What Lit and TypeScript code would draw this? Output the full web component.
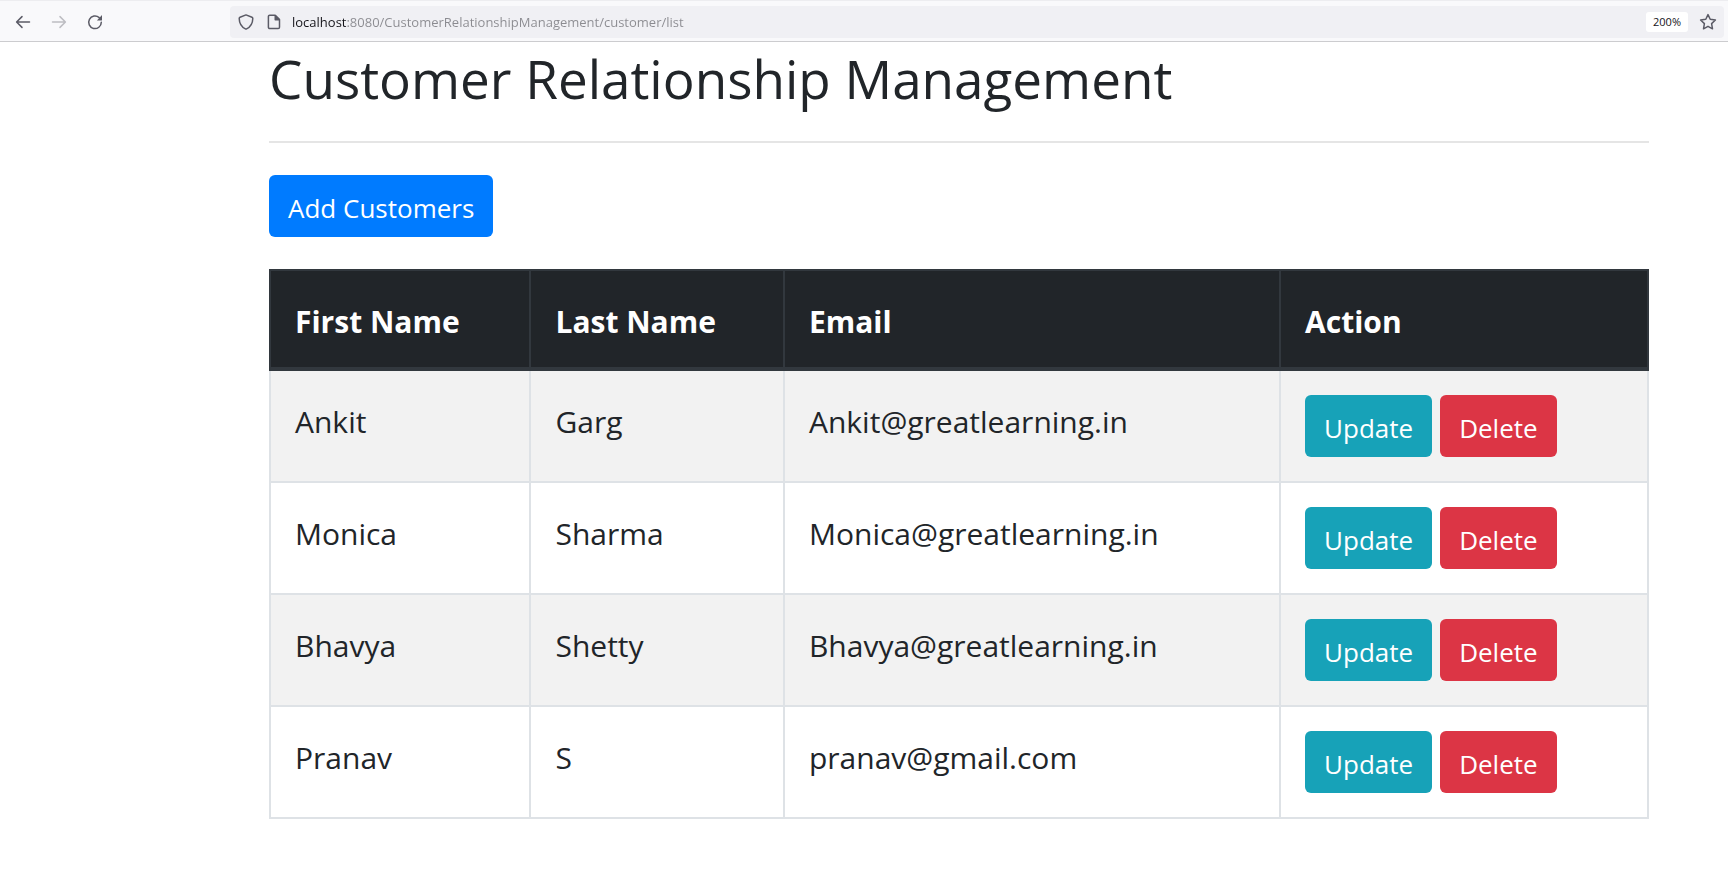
import { LitElement, html, css } from "lit";
import { customElement, property, state } from "lit/decorators.js";

interface Customer {
  firstName: string;
  lastName: string;
  email: string;
}

@customElement("browser-bar")
class BrowserBar extends LitElement {
  @property() url = "";

  static styles = css`
    :host {
      display: block;
      font-family: "Open Sans", "Noto Sans", sans-serif;
    }
    .bar {
      display: flex;
      align-items: center;
      box-sizing: border-box;
      height: 42px;
      padding: 3px 4px 2px 12px;
      border-top: 1px solid #ededf0;
      border-bottom: 1px solid #cccccf;
      background: #f9f9fb;
    }
    .nav {
      display: flex;
      gap: 14px;
      width: 218px;
      flex: none;
    }
    button {
      display: flex;
      padding: 3px;
      border: 0;
      background: none;
      font: inherit;
      color: #5b5b66;
    }
    button:disabled {
      color: #bdbdc2;
    }
    svg {
      display: block;
      fill: none;
      stroke: currentColor;
      stroke-width: 1.5;
      stroke-linecap: round;
      stroke-linejoin: round;
    }
    svg .solid {
      fill: currentColor;
      stroke: none;
    }
    .location {
      display: flex;
      align-items: center;
      flex: 1;
      min-width: 0;
      height: 32px;
      padding: 0 4px 0 5px;
      box-sizing: border-box;
      border-radius: 4px;
      background: #f0f0f4;
    }
    .site {
      display: flex;
      gap: 6px;
      margin-right: 7px;
    }
    .url {
      flex: 1;
      min-width: 0;
      padding: 0;
      border: 0;
      outline: 0;
      font: 13px/20px "Open Sans", "Noto Sans", sans-serif;
      color: transparent;
      background: linear-gradient(90deg, #15141a 55px, #8b8b90 55px);
      background-clip: text;
      -webkit-background-clip: text;
    }
    .zoom {
      margin-right: 8px;
      padding: 0 7px;
      border-radius: 3px;
      background: #fff;
      font-size: 11px;
      line-height: 20px;
      color: #15141a;
    }
  `;

  render() {
    return html`
      <nav class="bar" aria-label="Browser">
        <div class="nav">
          <button aria-label="Back">
            <svg width="16" height="16" viewBox="0 0 16 16"><path d="M14.5 8H1.8M7 2.6 1.6 8 7 13.4" /></svg>
          </button>
          <button aria-label="Forward" disabled>
            <svg width="16" height="16" viewBox="0 0 16 16"><path d="M1.5 8h12.7M9 2.6 14.4 8 9 13.4" /></svg>
          </button>
          <button aria-label="Reload">
            <svg width="16" height="16" viewBox="0 0 16 16">
              <path d="M12.2 3.6A6.3 6.3 0 1 0 14.3 8.3" />
              <path class="solid" d="M15 1.1v4.9a.6.6 0 0 1-.6.6H9.9z" />
            </svg>
          </button>
        </div>
        <div class="location">
          <div class="site">
            <button aria-label="Tracking protection">
              <svg width="16" height="16" viewBox="0 0 16 16">
                <path d="M8 .9 14 3.3c.5.2.8.6.8 1.1-.1 4.6-2.3 8.4-6.2 10.4a1.3 1.3 0 0 1-1.2 0C3.5 12.800 1.300 9 1.200 4.400c0-.5.3-.9.8-1.100z" />
              </svg>
            </button>
            <button aria-label="Site information">
              <svg width="16" height="16" viewBox="0 0 16 16">
                <path d="M3.7 1.200h5.500l4.300 4.300v7.700a1.300 1.300 0 0 1-1.300 1.300H3.700a1.300 1.300 0 0 1-1.300-1.300V2.500a1.300 1.300 0 0 1 1.300-1.300z" />
                <path class="solid" d="M8.500 1h1.200l4.200 4.200v1.200H9.200a.7.7 0 0 1-.7-.7z" />
              </svg>
            </button>
          </div>
          <input class="url" type="text" aria-label="Address" .value=${this.url} spellcheck="false" />
          <button class="zoom" aria-label="Reset zoom level">200%</button>
          <button aria-label="Bookmark this page">
            <svg width="18" height="18" viewBox="0 0 18 18">
              <path d="M9 1.600l2.200 4.700 5.200.7-3.800 3.600.9 5.200L9 13.300l-4.500 2.500.9-5.200L1.600 7l5.200-.7z" />
            </svg>
          </button>
        </div>
      </nav>
    `;
  }
}

@customElement("app-root")
class AppRoot extends LitElement {
  @state() private customers: Customer[] = [
    { firstName: "Ankit", lastName: "Garg", email: "Ankit@greatlearning.in" },
    { firstName: "Monica", lastName: "Sharma", email: "Monica@greatlearning.in" },
    { firstName: "Bhavya", lastName: "Shetty", email: "Bhavya@greatlearning.in" },
    { firstName: "Pranav", lastName: "S", email: "pranav@gmail.com" },
  ];

  static styles = css`
    :host {
      display: block;
      min-height: 100vh;
      background: #fff;
      color: #212529;
      font-family: "Open Sans", "Noto Sans", sans-serif;
      font-size: 30px;
      line-height: 54px;
    }
    .container {
      padding: 0 79px 60px 269px;
    }
    h1 {
      margin: 0;
      padding: 3px 0 28px;
      font-size: 53px;
      font-weight: 400;
      line-height: 68px;
    }
    hr {
      margin: 0 0 32px;
      border: 0;
      border-top: 2px solid #e5e5e5;
    }
    .btn {
      display: block;
      box-sizing: border-box;
      height: 62px;
      padding: 12px 19px 8px;
      border: 0;
      border-radius: 6px;
      color: #fff;
      font-size: 26px;
      line-height: 42px;
      text-decoration: none;
      white-space: nowrap;
    }
    .add {
      width: fit-content;
      margin-bottom: 32px;
      background: #007bff;
    }
    .update {
      background: #17a2b8;
    }
    .delete {
      background: #dc3545;
    }
    table {
      width: 100%;
      table-layout: fixed;
      border-collapse: collapse;
    }
    .first {
      width: 18.9%;
    }
    .last {
      width: 18.4%;
    }
    .email {
      width: 36%;
    }
    th,
    td {
      padding: 24px;
      border: 2px solid #dee2e6;
      text-align: left;
      vertical-align: top;
    }
    th {
      padding: 24px 24px 18px;
      border-color: #32383e;
      border-bottom-width: 4px;
      background: #212529;
      color: #fff;
      font-weight: 700;
    }
    tbody tr:nth-child(odd) {
      background: #f2f2f2;
    }
    .actions {
      display: flex;
      gap: 8px;
    }
  `;

  render() {
    return html`
      <browser-bar url="localhost:8080/CustomerRelationshipManagement/customer/list"></browser-bar>
      <main class="container">
        <h1>Customer Relationship Management</h1>
        <hr />
        <a class="btn add" href="#add">Add Customers</a>
        <table>
          <colgroup>
            <col class="first" />
            <col class="last" />
            <col class="email" />
            <col />
          </colgroup>
          <thead>
            <tr>
              <th scope="col">First Name</th>
              <th scope="col">Last Name</th>
              <th scope="col">Email</th>
              <th scope="col">Action</th>
            </tr>
          </thead>
          <tbody>
            ${this.customers.map(
              (c) => html`
                <tr>
                  <td>${c.firstName}</td>
                  <td>${c.lastName}</td>
                  <td>${c.email}</td>
                  <td>
                    <div class="actions">
                      <a class="btn update" href="#update">Update</a>
                      <a class="btn delete" href="#delete">Delete</a>
                    </div>
                  </td>
                </tr>
              `
            )}
          </tbody>
        </table>
      </main>
    `;
  }
}
